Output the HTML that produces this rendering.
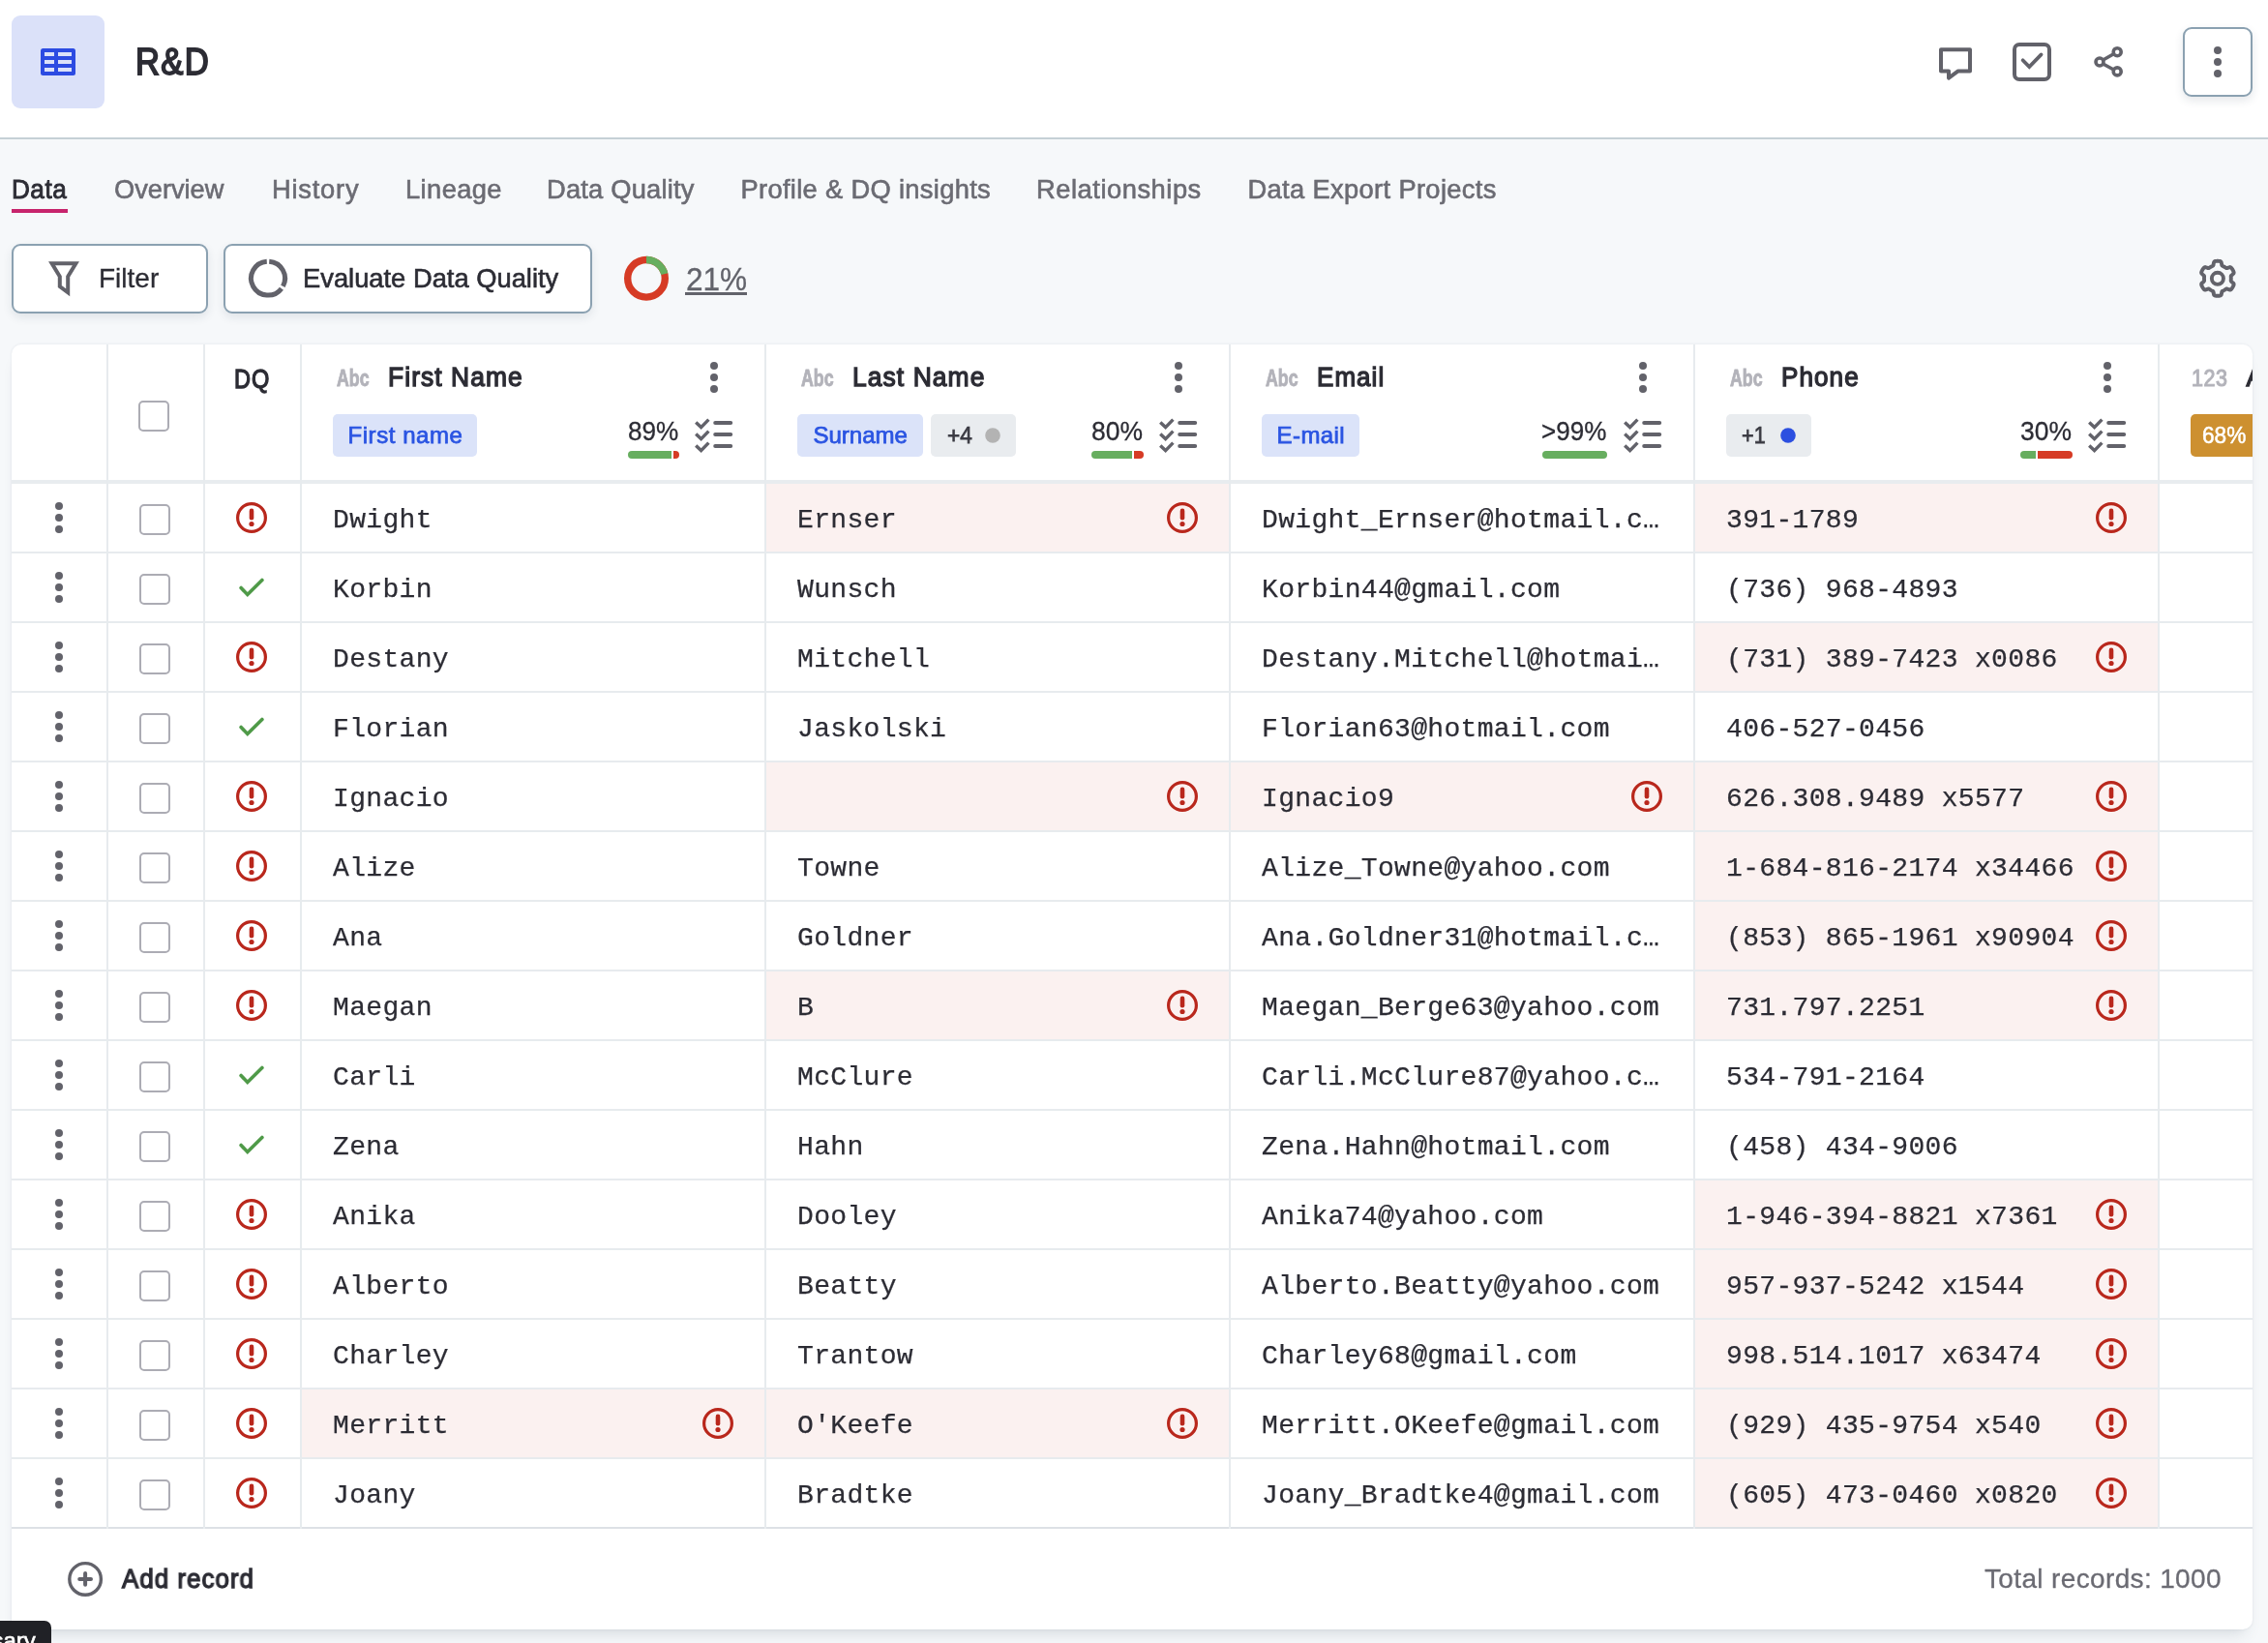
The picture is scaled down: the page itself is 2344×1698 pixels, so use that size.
<!DOCTYPE html>
<html lang="en"><head><meta charset="utf-8"><title>R&amp;D</title>
<style>
html,body{margin:0;padding:0}
body{width:2344px;height:1698px;overflow:hidden;background:#f6f8fa;position:relative;font-family:"Liberation Sans",sans-serif}
.r{position:absolute;display:block}
.t{position:absolute;white-space:nowrap;line-height:1;transform-origin:0 0}
.s{font-family:"Liberation Sans",sans-serif}
.m{font-family:"Liberation Mono",monospace}
.bm{display:inline-block;width:0;height:0}
#root{position:absolute;left:0;top:0;width:2344px;height:1698px;will-change:transform}
</style></head>
<body>
<div id="root">
<div class="r" style="left:0px;top:0px;width:2344px;height:142px;background:#fff;"></div>
<div class="r" style="left:0px;top:142px;width:2344px;height:2px;background:#c5d0d6;"></div>
<div class="r" style="left:12px;top:16px;width:96px;height:96px;background:#dbe1f9;border-radius:9px;"></div>
<svg class="r" style="left:42px;top:50px" width="36" height="28" viewBox="0 0 36 28"><rect width="36" height="28" rx="2.5" fill="#2c4be2"/><rect x="4" y="4" width="10" height="4" fill="#dbe1f9"/><rect x="18" y="4" width="14" height="4" fill="#dbe1f9"/><rect x="4" y="12" width="10" height="4" fill="#dbe1f9"/><rect x="18" y="12" width="14" height="4" fill="#dbe1f9"/><rect x="4" y="20" width="10" height="4" fill="#dbe1f9"/><rect x="18" y="20" width="14" height="4" fill="#dbe1f9"/></svg>
<div class="t s" id="title" style="left:140.00px;top:45.01px;font-size:38px;color:#2c2c34;-webkit-text-stroke:1.8px #2c2c34;letter-spacing:1.400px;transform:scaleX(0.9125);">R&amp;D</div>
<svg class="r" style="left:1996px;top:40px" width="52" height="52" viewBox="0 0 52 52"><path d="M10,11.3 H40 V33.4 H27.8 L18,40.6 V33.4 H10 Z" fill="none" stroke="#62626a" stroke-width="4" stroke-linejoin="round"/></svg>
<svg class="r" style="left:2076px;top:40px" width="48" height="48" viewBox="0 0 48 48"><rect x="6" y="6" width="36" height="36" rx="5" fill="none" stroke="#62626a" stroke-width="4"/><path d="M14.6,22.2 L21.3,29 L33.6,16.4" fill="none" stroke="#62626a" stroke-width="3.7" stroke-linecap="round"/></svg>
<svg class="r" style="left:2156px;top:40px" width="48" height="48" viewBox="0 0 48 48"><g fill="none" stroke="#62626a" stroke-width="3.6"><path d="M17.5,22 L28.5,15.8 M17.5,26 L28.5,32"/><circle cx="32.2" cy="13.7" r="4"/><circle cx="14" cy="24" r="4"/><circle cx="32.2" cy="33.9" r="4"/></g></svg>
<div class="r" style="left:2256px;top:28px;width:72px;height:72px;background:#fff;box-sizing:border-box;border:2px solid #8ba1b1;border-radius:9px;box-shadow:0 4px 10px rgba(40,60,80,.12);"></div>
<svg class="r" style="left:2280px;top:40px" width="24" height="48" viewBox="0 0 24 48"><g fill="#62626a"><circle cx="12" cy="12" r="4"/><circle cx="12" cy="24" r="4"/><circle cx="12" cy="36" r="4"/></g></svg>
<div class="t s" id="tab0" style="left:11.50px;top:182.00px;font-size:27.2px;color:#2c2c34;-webkit-text-stroke:0.9px #2c2c34;letter-spacing:0.500px;transform:scaleX(0.9622);">Data</div>
<div class="r" style="left:12px;top:216px;width:58px;height:4px;background:#c7246c;"></div>
<div class="t s" id="tab1" style="left:118.00px;top:182.00px;font-size:27.3px;color:#6b6b73;-webkit-text-stroke:0.6px #6b6b73;transform:scaleX(0.9965);">Overview</div>
<div class="t s" id="tab2" style="left:281.00px;top:182.00px;font-size:27.3px;color:#6b6b73;-webkit-text-stroke:0.6px #6b6b73;letter-spacing:0.767px;">History</div>
<div class="t s" id="tab3" style="left:419.00px;top:182.00px;font-size:27.3px;color:#6b6b73;-webkit-text-stroke:0.6px #6b6b73;letter-spacing:0.400px;">Lineage</div>
<div class="t s" id="tab4" style="left:565.00px;top:182.00px;font-size:27.3px;color:#6b6b73;-webkit-text-stroke:0.6px #6b6b73;letter-spacing:0.200px;">Data Quality</div>
<div class="t s" id="tab5" style="left:765.50px;top:182.00px;font-size:27.3px;color:#6b6b73;-webkit-text-stroke:0.6px #6b6b73;letter-spacing:0.320px;">Profile &amp; DQ insights</div>
<div class="t s" id="tab6" style="left:1071.00px;top:182.00px;font-size:27.3px;color:#6b6b73;-webkit-text-stroke:0.6px #6b6b73;letter-spacing:0.533px;">Relationships</div>
<div class="t s" id="tab7" style="left:1289.50px;top:182.00px;font-size:27.3px;color:#6b6b73;-webkit-text-stroke:0.6px #6b6b73;letter-spacing:0.347px;">Data Export Projects</div>
<div class="r" style="left:12px;top:252px;width:203px;height:72px;background:#fff;box-sizing:border-box;border:2px solid #8ba1b1;border-radius:9px;box-shadow:0 4px 10px rgba(40,60,80,.10);"></div>
<svg class="r" style="left:46px;top:266px" width="40" height="44" viewBox="0 0 40 44"><path d="M7.6,6.3 H32.4 L24.2,19.8 V36.3 L15.8,30 V19.8 Z" fill="none" stroke="#62626a" stroke-width="4" stroke-linejoin="miter"/></svg>
<div class="t s" id="filter" style="left:102.00px;top:274.01px;font-size:28px;color:#2c2c34;-webkit-text-stroke:0.3px #2c2c34;">Filter</div>
<div class="r" style="left:231px;top:252px;width:381px;height:72px;background:#fff;box-sizing:border-box;border:2px solid #8ba1b1;border-radius:9px;box-shadow:0 4px 10px rgba(40,60,80,.10);"></div>
<svg class="r" style="left:253px;top:264px" width="48" height="48" viewBox="0 0 48 48"><g fill="none" stroke="#62626a" stroke-width="5"><path d="M25.22,6.14 A17.5,17.5 0 0 1 39.45,31.82"/><path d="M37.98,34.13 A17.5,17.5 0 1 1 22.78,6.14"/></g></svg>
<div class="t s" id="eval" style="left:312.50px;top:274.00px;font-size:27.3px;color:#2c2c34;-webkit-text-stroke:0.6px #2c2c34;transform:scaleX(1.0008);">Evaluate Data Quality</div>
<svg class="r" style="left:644px;top:264px" width="48" height="48" viewBox="0 0 48 48"><g fill="none" stroke-width="7.4"><circle cx="24" cy="23.8" r="19.3" stroke="#d63b25"/><path d="M24.00,4.50 A19.3,19.3 0 0 1 42.73,19.13" stroke="#67ae5f"/></g></svg>
<div class="t s" id="pct21" style="left:709.00px;top:271.01px;font-size:34px;color:#62636b;-webkit-text-stroke:0.3px #62636b;transform:scaleX(0.9274);">21%</div>
<div class="r" style="left:708px;top:302px;width:63.8px;height:2.7px;background:#62636b;"></div>
<svg class="r" style="left:2268px;top:264px" width="48" height="48" viewBox="0 0 48 48"><g fill="none" stroke="#62626a" stroke-width="3.9" stroke-linejoin="round"><path d="M23.90,5.80 L24.69,5.82 L25.47,5.88 L26.25,5.99 L27.00,6.21 L27.66,6.84 L28.03,8.39 L28.27,9.95 L28.70,10.61 L29.23,10.93 L29.78,11.20 L30.32,11.47 L30.85,11.76 L31.37,12.08 L31.88,12.41 L32.38,12.75 L32.93,13.04 L33.71,13.09 L35.18,12.52 L36.71,12.06 L37.58,12.32 L38.15,12.86 L38.64,13.48 L39.08,14.13 L39.49,14.80 L39.86,15.49 L40.21,16.20 L40.50,16.92 L40.68,17.69 L40.47,18.58 L39.31,19.67 L38.08,20.66 L37.73,21.36 L37.71,21.98 L37.75,22.59 L37.79,23.19 L37.80,23.80 L37.79,24.41 L37.75,25.01 L37.71,25.62 L37.73,26.24 L38.08,26.94 L39.31,27.93 L40.47,29.02 L40.68,29.91 L40.50,30.68 L40.21,31.40 L39.86,32.11 L39.49,32.80 L39.08,33.47 L38.64,34.12 L38.15,34.74 L37.58,35.28 L36.71,35.54 L35.18,35.08 L33.71,34.51 L32.93,34.56 L32.38,34.85 L31.88,35.19 L31.37,35.52 L30.85,35.84 L30.32,36.13 L29.78,36.40 L29.23,36.67 L28.70,36.99 L28.27,37.65 L28.03,39.21 L27.66,40.76 L27.00,41.39 L26.25,41.61 L25.47,41.72 L24.69,41.78 L23.90,41.80 L23.11,41.78 L22.33,41.72 L21.55,41.61 L20.80,41.39 L20.14,40.76 L19.77,39.21 L19.53,37.65 L19.10,36.99 L18.57,36.67 L18.02,36.40 L17.48,36.13 L16.95,35.84 L16.43,35.52 L15.92,35.19 L15.42,34.85 L14.87,34.56 L14.09,34.51 L12.62,35.08 L11.09,35.54 L10.22,35.28 L9.65,34.74 L9.16,34.12 L8.72,33.47 L8.31,32.80 L7.94,32.11 L7.59,31.40 L7.30,30.68 L7.12,29.91 L7.33,29.02 L8.49,27.93 L9.72,26.94 L10.07,26.24 L10.09,25.62 L10.05,25.01 L10.01,24.41 L10.00,23.80 L10.01,23.19 L10.05,22.59 L10.09,21.98 L10.07,21.36 L9.72,20.66 L8.49,19.67 L7.33,18.58 L7.12,17.69 L7.30,16.92 L7.59,16.20 L7.94,15.49 L8.31,14.80 L8.72,14.13 L9.16,13.48 L9.65,12.86 L10.22,12.32 L11.09,12.06 L12.62,12.52 L14.09,13.09 L14.87,13.04 L15.42,12.75 L15.92,12.41 L16.43,12.08 L16.95,11.76 L17.48,11.47 L18.02,11.20 L18.57,10.93 L19.10,10.61 L19.53,9.95 L19.77,8.39 L20.14,6.84 L20.80,6.21 L21.55,5.99 L22.33,5.88 L23.11,5.82 Z"/><circle cx="23.9" cy="23.8" r="6.05"/></g></svg>
<div class="r" style="left:12px;top:356px;width:2316px;height:1328px;background:#fff;border-radius:10px;box-shadow:0 0 3px rgba(50,70,90,.10),0 12px 16px -8px rgba(50,70,90,.17);"></div>
<div class="r" id="tbl" style="left:12px;top:356px;width:2316px;height:1328px;border-radius:10px;overflow:hidden;">
<div style="position:absolute;left:-12px;top:-356px;">
<div class="r" style="left:792px;top:500px;width:478px;height:70px;background:#fbf1f0;"></div>
<div class="r" style="left:1752px;top:500px;width:478px;height:70px;background:#fbf1f0;"></div>
<div class="r" style="left:1752px;top:644px;width:478px;height:70px;background:#fbf1f0;"></div>
<div class="r" style="left:792px;top:788px;width:478px;height:70px;background:#fbf1f0;"></div>
<div class="r" style="left:1272px;top:788px;width:478px;height:70px;background:#fbf1f0;"></div>
<div class="r" style="left:1752px;top:788px;width:478px;height:70px;background:#fbf1f0;"></div>
<div class="r" style="left:1752px;top:860px;width:478px;height:70px;background:#fbf1f0;"></div>
<div class="r" style="left:1752px;top:932px;width:478px;height:70px;background:#fbf1f0;"></div>
<div class="r" style="left:792px;top:1004px;width:478px;height:70px;background:#fbf1f0;"></div>
<div class="r" style="left:1752px;top:1004px;width:478px;height:70px;background:#fbf1f0;"></div>
<div class="r" style="left:1752px;top:1220px;width:478px;height:70px;background:#fbf1f0;"></div>
<div class="r" style="left:1752px;top:1292px;width:478px;height:70px;background:#fbf1f0;"></div>
<div class="r" style="left:1752px;top:1364px;width:478px;height:70px;background:#fbf1f0;"></div>
<div class="r" style="left:312px;top:1436px;width:478px;height:70px;background:#fbf1f0;"></div>
<div class="r" style="left:792px;top:1436px;width:478px;height:70px;background:#fbf1f0;"></div>
<div class="r" style="left:1752px;top:1436px;width:478px;height:70px;background:#fbf1f0;"></div>
<div class="r" style="left:1752px;top:1508px;width:478px;height:70px;background:#fbf1f0;"></div>
<div class="r" style="left:12px;top:570px;width:2316px;height:2px;background:#e7ebee;"></div>
<div class="r" style="left:12px;top:642px;width:2316px;height:2px;background:#e7ebee;"></div>
<div class="r" style="left:12px;top:714px;width:2316px;height:2px;background:#e7ebee;"></div>
<div class="r" style="left:12px;top:786px;width:2316px;height:2px;background:#e7ebee;"></div>
<div class="r" style="left:12px;top:858px;width:2316px;height:2px;background:#e7ebee;"></div>
<div class="r" style="left:12px;top:930px;width:2316px;height:2px;background:#e7ebee;"></div>
<div class="r" style="left:12px;top:1002px;width:2316px;height:2px;background:#e7ebee;"></div>
<div class="r" style="left:12px;top:1074px;width:2316px;height:2px;background:#e7ebee;"></div>
<div class="r" style="left:12px;top:1146px;width:2316px;height:2px;background:#e7ebee;"></div>
<div class="r" style="left:12px;top:1218px;width:2316px;height:2px;background:#e7ebee;"></div>
<div class="r" style="left:12px;top:1290px;width:2316px;height:2px;background:#e7ebee;"></div>
<div class="r" style="left:12px;top:1362px;width:2316px;height:2px;background:#e7ebee;"></div>
<div class="r" style="left:12px;top:1434px;width:2316px;height:2px;background:#e7ebee;"></div>
<div class="r" style="left:12px;top:1506px;width:2316px;height:2px;background:#e7ebee;"></div>
<div class="r" style="left:12px;top:1578px;width:2316px;height:2px;background:#dde1e5;"></div>
<div class="r" style="left:12px;top:496px;width:2316px;height:4px;background:#e8ecef;"></div>
<div class="r" style="left:110px;top:356px;width:2px;height:1224px;background:#e7ebee;"></div>
<div class="r" style="left:210px;top:356px;width:2px;height:1224px;background:#e7ebee;"></div>
<div class="r" style="left:310px;top:356px;width:2px;height:1224px;background:#e7ebee;"></div>
<div class="r" style="left:790px;top:356px;width:2px;height:1224px;background:#e7ebee;"></div>
<div class="r" style="left:1270px;top:356px;width:2px;height:1224px;background:#e7ebee;"></div>
<div class="r" style="left:1750px;top:356px;width:2px;height:1224px;background:#e7ebee;"></div>
<div class="r" style="left:2230px;top:356px;width:2px;height:1224px;background:#e7ebee;"></div>
<div class="r" style="left:143px;top:414px;width:32px;height:32px;background:#fff;box-sizing:border-box;border:2px solid #acacb4;border-radius:5px;"></div>
<div class="t s" id="dq" style="left:242.00px;top:379.00px;font-size:26.8px;color:#2c2c34;-webkit-text-stroke:1.3px #2c2c34;letter-spacing:1.100px;transform:scaleX(0.8777);">DQ</div>
<div class="t s" id="abc0" style="left:347.50px;top:379.01px;font-size:24px;color:#b3b3ba;font-weight:700;-webkit-text-stroke:0.9px #b3b3ba;transform:scaleX(0.7395);">Abc</div>
<div class="t s" id="h0" style="left:401.00px;top:377.00px;font-size:26.8px;color:#2c2c34;-webkit-text-stroke:1.3px #2c2c34;letter-spacing:1.100px;transform:scaleX(0.9843);">First Name</div>
<svg class="r" style="left:732px;top:371.95px" width="12" height="36.1" viewBox="0 0 12 36.1"><g fill="#62626a"><circle cx="6" cy="6" r="4.0"/><circle cx="6" cy="18.05" r="4.0"/><circle cx="6" cy="30.1" r="4.0"/></g></svg>
<div class="r" style="left:344px;top:428px;width:148.8px;height:44px;background:#dbe3f9;border-radius:5px;"></div>
<div class="t s" id="chip0_0" style="left:359.50px;top:438.01px;font-size:24px;color:#2a54e2;-webkit-text-stroke:0.75px #2a54e2;letter-spacing:0.556px;">First name</div>
<div class="t s" id="pct0" style="left:649.00px;top:432.01px;font-size:28px;color:#2c2c34;-webkit-text-stroke:0.3px #2c2c34;transform:scaleX(0.9336);">89%</div>
<div class="r" style="left:649px;top:466px;width:45px;height:8px;background:#67ae5f;border-radius:4px 0 0 4px;"></div>
<div class="r" style="left:696px;top:466px;width:6px;height:8px;background:#d63b25;border-radius:0 4px 4px 0;"></div>
<svg class="r" style="left:717.3px;top:431.3px" width="42" height="40" viewBox="0 0 42 40"><g fill="none" stroke="#62626a" stroke-linecap="round" stroke-linejoin="miter"><path d="M2.2,5.6 L7.6,10.6 L15.4,2.6" stroke-width="3.4" stroke-linecap="butt"/><path d="M22.2,6 H38.2" stroke-width="4"/><path d="M2.2,17.6 L7.6,22.6 L15.4,14.6" stroke-width="3.4" stroke-linecap="butt"/><path d="M22.2,18 H38.2" stroke-width="4"/><path d="M2.2,29.6 L7.6,34.6 L15.4,26.6" stroke-width="3.4" stroke-linecap="butt"/><path d="M22.2,30 H38.2" stroke-width="4"/></g></svg>
<div class="t s" id="abc1" style="left:827.50px;top:379.01px;font-size:24px;color:#b3b3ba;font-weight:700;-webkit-text-stroke:0.9px #b3b3ba;transform:scaleX(0.7395);">Abc</div>
<div class="t s" id="h1" style="left:881.00px;top:377.00px;font-size:26.8px;color:#2c2c34;-webkit-text-stroke:1.3px #2c2c34;letter-spacing:1.100px;transform:scaleX(0.9854);">Last Name</div>
<svg class="r" style="left:1212px;top:371.95px" width="12" height="36.1" viewBox="0 0 12 36.1"><g fill="#62626a"><circle cx="6" cy="6" r="4.0"/><circle cx="6" cy="18.05" r="4.0"/><circle cx="6" cy="30.1" r="4.0"/></g></svg>
<div class="r" style="left:824px;top:428px;width:129.5px;height:44px;background:#dbe3f9;border-radius:5px;"></div>
<div class="t s" id="chip1_0" style="left:840.50px;top:438.01px;font-size:24px;color:#2a54e2;-webkit-text-stroke:0.75px #2a54e2;">Surname</div>
<div class="r" style="left:962.4px;top:428px;width:87.39999999999998px;height:44px;background:#e9ecef;border-radius:5px;"></div>
<div class="t s" id="chip1_1" style="left:979.00px;top:438.01px;font-size:24px;color:#3a3a42;-webkit-text-stroke:0.75px #3a3a42;transform:scaleX(0.9416);">+4</div>
<svg class="r" style="left:1017.8px;top:442px" width="16" height="16" viewBox="0 0 16 16"><circle cx="8" cy="8" r="7.8" fill="#b3b3b3"/></svg>
<div class="t s" id="pct1" style="left:1128.00px;top:432.01px;font-size:28px;color:#2c2c34;-webkit-text-stroke:0.3px #2c2c34;transform:scaleX(0.9455);">80%</div>
<div class="r" style="left:1128px;top:466px;width:42px;height:8px;background:#67ae5f;border-radius:4px 0 0 4px;"></div>
<div class="r" style="left:1172px;top:466px;width:10px;height:8px;background:#d63b25;border-radius:0 4px 4px 0;"></div>
<svg class="r" style="left:1197.3px;top:431.3px" width="42" height="40" viewBox="0 0 42 40"><g fill="none" stroke="#62626a" stroke-linecap="round" stroke-linejoin="miter"><path d="M2.2,5.6 L7.6,10.6 L15.4,2.6" stroke-width="3.4" stroke-linecap="butt"/><path d="M22.2,6 H38.2" stroke-width="4"/><path d="M2.2,17.6 L7.6,22.6 L15.4,14.6" stroke-width="3.4" stroke-linecap="butt"/><path d="M22.2,18 H38.2" stroke-width="4"/><path d="M2.2,29.6 L7.6,34.6 L15.4,26.6" stroke-width="3.4" stroke-linecap="butt"/><path d="M22.2,30 H38.2" stroke-width="4"/></g></svg>
<div class="t s" id="abc2" style="left:1307.50px;top:379.01px;font-size:24px;color:#b3b3ba;font-weight:700;-webkit-text-stroke:0.9px #b3b3ba;transform:scaleX(0.7395);">Abc</div>
<div class="t s" id="h2" style="left:1361.00px;top:377.00px;font-size:26.8px;color:#2c2c34;-webkit-text-stroke:1.3px #2c2c34;letter-spacing:1.100px;transform:scaleX(0.9686);">Email</div>
<svg class="r" style="left:1692px;top:371.95px" width="12" height="36.1" viewBox="0 0 12 36.1"><g fill="#62626a"><circle cx="6" cy="6" r="4.0"/><circle cx="6" cy="18.05" r="4.0"/><circle cx="6" cy="30.1" r="4.0"/></g></svg>
<div class="r" style="left:1304px;top:428px;width:100.70000000000005px;height:44px;background:#dbe3f9;border-radius:5px;"></div>
<div class="t s" id="chip2_0" style="left:1319.50px;top:438.01px;font-size:24px;color:#2a54e2;-webkit-text-stroke:0.75px #2a54e2;letter-spacing:0.440px;">E-mail</div>
<div class="t s" id="pct2" style="left:1593.00px;top:432.01px;font-size:28px;color:#2c2c34;-webkit-text-stroke:0.3px #2c2c34;transform:scaleX(0.9296);">&gt;99%</div>
<div class="r" style="left:1594px;top:466px;width:67px;height:8px;background:#67ae5f;border-radius:4px;"></div>
<svg class="r" style="left:1677.3px;top:431.3px" width="42" height="40" viewBox="0 0 42 40"><g fill="none" stroke="#62626a" stroke-linecap="round" stroke-linejoin="miter"><path d="M2.2,5.6 L7.6,10.6 L15.4,2.6" stroke-width="3.4" stroke-linecap="butt"/><path d="M22.2,6 H38.2" stroke-width="4"/><path d="M2.2,17.6 L7.6,22.6 L15.4,14.6" stroke-width="3.4" stroke-linecap="butt"/><path d="M22.2,18 H38.2" stroke-width="4"/><path d="M2.2,29.6 L7.6,34.6 L15.4,26.6" stroke-width="3.4" stroke-linecap="butt"/><path d="M22.2,30 H38.2" stroke-width="4"/></g></svg>
<div class="t s" id="abc3" style="left:1787.50px;top:379.01px;font-size:24px;color:#b3b3ba;font-weight:700;-webkit-text-stroke:0.9px #b3b3ba;transform:scaleX(0.7395);">Abc</div>
<div class="t s" id="h3" style="left:1841.00px;top:377.00px;font-size:26.8px;color:#2c2c34;-webkit-text-stroke:1.3px #2c2c34;letter-spacing:1.100px;transform:scaleX(0.9729);">Phone</div>
<svg class="r" style="left:2172px;top:371.95px" width="12" height="36.1" viewBox="0 0 12 36.1"><g fill="#62626a"><circle cx="6" cy="6" r="4.0"/><circle cx="6" cy="18.05" r="4.0"/><circle cx="6" cy="30.1" r="4.0"/></g></svg>
<div class="r" style="left:1784px;top:428px;width:87.70000000000005px;height:44px;background:#e9ecef;border-radius:5px;"></div>
<div class="t s" id="chip3_0" style="left:1800.00px;top:438.01px;font-size:24px;color:#3a3a42;-webkit-text-stroke:0.75px #3a3a42;transform:scaleX(0.9015);">+1</div>
<svg class="r" style="left:1839.7px;top:442px" width="16" height="16" viewBox="0 0 16 16"><circle cx="8" cy="8" r="7.8" fill="#2c4fe0"/></svg>
<div class="t s" id="pct3" style="left:2088.00px;top:432.01px;font-size:28px;color:#2c2c34;-webkit-text-stroke:0.3px #2c2c34;transform:scaleX(0.9455);">30%</div>
<div class="r" style="left:2088px;top:466px;width:16px;height:8px;background:#67ae5f;border-radius:4px 0 0 4px;"></div>
<div class="r" style="left:2106px;top:466px;width:36px;height:8px;background:#d63b25;border-radius:0 4px 4px 0;"></div>
<svg class="r" style="left:2157.3px;top:431.3px" width="42" height="40" viewBox="0 0 42 40"><g fill="none" stroke="#62626a" stroke-linecap="round" stroke-linejoin="miter"><path d="M2.2,5.6 L7.6,10.6 L15.4,2.6" stroke-width="3.4" stroke-linecap="butt"/><path d="M22.2,6 H38.2" stroke-width="4"/><path d="M2.2,17.6 L7.6,22.6 L15.4,14.6" stroke-width="3.4" stroke-linecap="butt"/><path d="M22.2,18 H38.2" stroke-width="4"/><path d="M2.2,29.6 L7.6,34.6 L15.4,26.6" stroke-width="3.4" stroke-linecap="butt"/><path d="M22.2,30 H38.2" stroke-width="4"/></g></svg>
<div class="t s" id="n123" style="left:2264.50px;top:379.00px;font-size:24.5px;color:#b3b3ba;-webkit-text-stroke:1.1px #b3b3ba;letter-spacing:0.600px;transform:scaleX(0.8780);">123</div>
<div class="t s" id="colA" style="left:2321.50px;top:376.00px;font-size:27.2px;color:#2c2c34;-webkit-text-stroke:1.3px #2c2c34;">Age</div>
<div class="r" style="left:2264px;top:428px;width:80px;height:44px;background:#cd9030;border-radius:5px;"></div>
<div class="t s" id="pct68" style="left:2275.50px;top:438.01px;font-size:24px;color:#fff;-webkit-text-stroke:0.55px #fff;transform:scaleX(0.9435);">68%</div>
<svg class="r" style="left:55px;top:516.95px" width="12" height="36.1" viewBox="0 0 12 36.1"><g fill="#62626a"><circle cx="6" cy="6" r="4.0"/><circle cx="6" cy="18.05" r="4.0"/><circle cx="6" cy="30.1" r="4.0"/></g></svg>
<div class="r" style="left:144px;top:521px;width:32px;height:32px;background:#fff;box-sizing:border-box;border:2px solid #acacb4;border-radius:5px;"></div>
<svg class="r" style="left:242px;top:517px" width="36" height="36" viewBox="0 0 36 36"><g><circle cx="18" cy="18" r="14.4" fill="none" stroke="#b9271c" stroke-width="3.2"/><path d="M18,10.9 V18.3" stroke="#b9271c" stroke-width="4.6" stroke-linecap="round"/><circle cx="18" cy="24.5" r="2.6" fill="#b9271c"/></g></svg>
<div class="t m" style="left:344px;top:523.72px;font-size:28px;letter-spacing:.33px;color:#2c2c34;-webkit-text-stroke:.25px #2c2c34">Dwight</div>
<div class="t m" style="left:824px;top:523.72px;font-size:28px;letter-spacing:.33px;color:#2c2c34;-webkit-text-stroke:.25px #2c2c34">Ernser</div>
<svg class="r" style="left:1204px;top:517px" width="36" height="36" viewBox="0 0 36 36"><g><circle cx="18" cy="18" r="14.4" fill="none" stroke="#b9271c" stroke-width="3.2"/><path d="M18,10.9 V18.3" stroke="#b9271c" stroke-width="4.6" stroke-linecap="round"/><circle cx="18" cy="24.5" r="2.6" fill="#b9271c"/></g></svg>
<div class="t m" style="left:1304px;top:523.72px;font-size:28px;letter-spacing:.33px;color:#2c2c34;-webkit-text-stroke:.25px #2c2c34">Dwight_Ernser@hotmail.c…</div>
<div class="t m" style="left:1784px;top:523.72px;font-size:28px;letter-spacing:.33px;color:#2c2c34;-webkit-text-stroke:.25px #2c2c34">391-1789</div>
<svg class="r" style="left:2164px;top:517px" width="36" height="36" viewBox="0 0 36 36"><g><circle cx="18" cy="18" r="14.4" fill="none" stroke="#b9271c" stroke-width="3.2"/><path d="M18,10.9 V18.3" stroke="#b9271c" stroke-width="4.6" stroke-linecap="round"/><circle cx="18" cy="24.5" r="2.6" fill="#b9271c"/></g></svg>
<svg class="r" style="left:55px;top:588.95px" width="12" height="36.1" viewBox="0 0 12 36.1"><g fill="#62626a"><circle cx="6" cy="6" r="4.0"/><circle cx="6" cy="18.05" r="4.0"/><circle cx="6" cy="30.1" r="4.0"/></g></svg>
<div class="r" style="left:144px;top:593px;width:32px;height:32px;background:#fff;box-sizing:border-box;border:2px solid #acacb4;border-radius:5px;"></div>
<svg class="r" style="left:242px;top:589px" width="36" height="36" viewBox="0 0 36 36"><path d="M7.1,18.5 L13.8,25.5 L28.9,10.5" fill="none" stroke="#4f9a48" stroke-width="3.6" stroke-linecap="round" stroke-linejoin="miter"/></svg>
<div class="t m" style="left:344px;top:595.72px;font-size:28px;letter-spacing:.33px;color:#2c2c34;-webkit-text-stroke:.25px #2c2c34">Korbin</div>
<div class="t m" style="left:824px;top:595.72px;font-size:28px;letter-spacing:.33px;color:#2c2c34;-webkit-text-stroke:.25px #2c2c34">Wunsch</div>
<div class="t m" style="left:1304px;top:595.72px;font-size:28px;letter-spacing:.33px;color:#2c2c34;-webkit-text-stroke:.25px #2c2c34">Korbin44@gmail.com</div>
<div class="t m" style="left:1784px;top:595.72px;font-size:28px;letter-spacing:.33px;color:#2c2c34;-webkit-text-stroke:.25px #2c2c34">(736) 968-4893</div>
<svg class="r" style="left:55px;top:660.95px" width="12" height="36.1" viewBox="0 0 12 36.1"><g fill="#62626a"><circle cx="6" cy="6" r="4.0"/><circle cx="6" cy="18.05" r="4.0"/><circle cx="6" cy="30.1" r="4.0"/></g></svg>
<div class="r" style="left:144px;top:665px;width:32px;height:32px;background:#fff;box-sizing:border-box;border:2px solid #acacb4;border-radius:5px;"></div>
<svg class="r" style="left:242px;top:661px" width="36" height="36" viewBox="0 0 36 36"><g><circle cx="18" cy="18" r="14.4" fill="none" stroke="#b9271c" stroke-width="3.2"/><path d="M18,10.9 V18.3" stroke="#b9271c" stroke-width="4.6" stroke-linecap="round"/><circle cx="18" cy="24.5" r="2.6" fill="#b9271c"/></g></svg>
<div class="t m" style="left:344px;top:667.72px;font-size:28px;letter-spacing:.33px;color:#2c2c34;-webkit-text-stroke:.25px #2c2c34">Destany</div>
<div class="t m" style="left:824px;top:667.72px;font-size:28px;letter-spacing:.33px;color:#2c2c34;-webkit-text-stroke:.25px #2c2c34">Mitchell</div>
<div class="t m" style="left:1304px;top:667.72px;font-size:28px;letter-spacing:.33px;color:#2c2c34;-webkit-text-stroke:.25px #2c2c34">Destany.Mitchell@hotmai…</div>
<div class="t m" style="left:1784px;top:667.72px;font-size:28px;letter-spacing:.33px;color:#2c2c34;-webkit-text-stroke:.25px #2c2c34">(731) 389-7423 x0086</div>
<svg class="r" style="left:2164px;top:661px" width="36" height="36" viewBox="0 0 36 36"><g><circle cx="18" cy="18" r="14.4" fill="none" stroke="#b9271c" stroke-width="3.2"/><path d="M18,10.9 V18.3" stroke="#b9271c" stroke-width="4.6" stroke-linecap="round"/><circle cx="18" cy="24.5" r="2.6" fill="#b9271c"/></g></svg>
<svg class="r" style="left:55px;top:732.95px" width="12" height="36.1" viewBox="0 0 12 36.1"><g fill="#62626a"><circle cx="6" cy="6" r="4.0"/><circle cx="6" cy="18.05" r="4.0"/><circle cx="6" cy="30.1" r="4.0"/></g></svg>
<div class="r" style="left:144px;top:737px;width:32px;height:32px;background:#fff;box-sizing:border-box;border:2px solid #acacb4;border-radius:5px;"></div>
<svg class="r" style="left:242px;top:733px" width="36" height="36" viewBox="0 0 36 36"><path d="M7.1,18.5 L13.8,25.5 L28.9,10.5" fill="none" stroke="#4f9a48" stroke-width="3.6" stroke-linecap="round" stroke-linejoin="miter"/></svg>
<div class="t m" style="left:344px;top:739.72px;font-size:28px;letter-spacing:.33px;color:#2c2c34;-webkit-text-stroke:.25px #2c2c34">Florian</div>
<div class="t m" style="left:824px;top:739.72px;font-size:28px;letter-spacing:.33px;color:#2c2c34;-webkit-text-stroke:.25px #2c2c34">Jaskolski</div>
<div class="t m" style="left:1304px;top:739.72px;font-size:28px;letter-spacing:.33px;color:#2c2c34;-webkit-text-stroke:.25px #2c2c34">Florian63@hotmail.com</div>
<div class="t m" style="left:1784px;top:739.72px;font-size:28px;letter-spacing:.33px;color:#2c2c34;-webkit-text-stroke:.25px #2c2c34">406-527-0456</div>
<svg class="r" style="left:55px;top:804.95px" width="12" height="36.1" viewBox="0 0 12 36.1"><g fill="#62626a"><circle cx="6" cy="6" r="4.0"/><circle cx="6" cy="18.05" r="4.0"/><circle cx="6" cy="30.1" r="4.0"/></g></svg>
<div class="r" style="left:144px;top:809px;width:32px;height:32px;background:#fff;box-sizing:border-box;border:2px solid #acacb4;border-radius:5px;"></div>
<svg class="r" style="left:242px;top:805px" width="36" height="36" viewBox="0 0 36 36"><g><circle cx="18" cy="18" r="14.4" fill="none" stroke="#b9271c" stroke-width="3.2"/><path d="M18,10.9 V18.3" stroke="#b9271c" stroke-width="4.6" stroke-linecap="round"/><circle cx="18" cy="24.5" r="2.6" fill="#b9271c"/></g></svg>
<div class="t m" style="left:344px;top:811.72px;font-size:28px;letter-spacing:.33px;color:#2c2c34;-webkit-text-stroke:.25px #2c2c34">Ignacio</div>
<svg class="r" style="left:1204px;top:805px" width="36" height="36" viewBox="0 0 36 36"><g><circle cx="18" cy="18" r="14.4" fill="none" stroke="#b9271c" stroke-width="3.2"/><path d="M18,10.9 V18.3" stroke="#b9271c" stroke-width="4.6" stroke-linecap="round"/><circle cx="18" cy="24.5" r="2.6" fill="#b9271c"/></g></svg>
<div class="t m" style="left:1304px;top:811.72px;font-size:28px;letter-spacing:.33px;color:#2c2c34;-webkit-text-stroke:.25px #2c2c34">Ignacio9</div>
<svg class="r" style="left:1684px;top:805px" width="36" height="36" viewBox="0 0 36 36"><g><circle cx="18" cy="18" r="14.4" fill="none" stroke="#b9271c" stroke-width="3.2"/><path d="M18,10.9 V18.3" stroke="#b9271c" stroke-width="4.6" stroke-linecap="round"/><circle cx="18" cy="24.5" r="2.6" fill="#b9271c"/></g></svg>
<div class="t m" style="left:1784px;top:811.72px;font-size:28px;letter-spacing:.33px;color:#2c2c34;-webkit-text-stroke:.25px #2c2c34">626.308.9489 x5577</div>
<svg class="r" style="left:2164px;top:805px" width="36" height="36" viewBox="0 0 36 36"><g><circle cx="18" cy="18" r="14.4" fill="none" stroke="#b9271c" stroke-width="3.2"/><path d="M18,10.9 V18.3" stroke="#b9271c" stroke-width="4.6" stroke-linecap="round"/><circle cx="18" cy="24.5" r="2.6" fill="#b9271c"/></g></svg>
<svg class="r" style="left:55px;top:876.95px" width="12" height="36.1" viewBox="0 0 12 36.1"><g fill="#62626a"><circle cx="6" cy="6" r="4.0"/><circle cx="6" cy="18.05" r="4.0"/><circle cx="6" cy="30.1" r="4.0"/></g></svg>
<div class="r" style="left:144px;top:881px;width:32px;height:32px;background:#fff;box-sizing:border-box;border:2px solid #acacb4;border-radius:5px;"></div>
<svg class="r" style="left:242px;top:877px" width="36" height="36" viewBox="0 0 36 36"><g><circle cx="18" cy="18" r="14.4" fill="none" stroke="#b9271c" stroke-width="3.2"/><path d="M18,10.9 V18.3" stroke="#b9271c" stroke-width="4.6" stroke-linecap="round"/><circle cx="18" cy="24.5" r="2.6" fill="#b9271c"/></g></svg>
<div class="t m" style="left:344px;top:883.72px;font-size:28px;letter-spacing:.33px;color:#2c2c34;-webkit-text-stroke:.25px #2c2c34">Alize</div>
<div class="t m" style="left:824px;top:883.72px;font-size:28px;letter-spacing:.33px;color:#2c2c34;-webkit-text-stroke:.25px #2c2c34">Towne</div>
<div class="t m" style="left:1304px;top:883.72px;font-size:28px;letter-spacing:.33px;color:#2c2c34;-webkit-text-stroke:.25px #2c2c34">Alize_Towne@yahoo.com</div>
<div class="t m" style="left:1784px;top:883.72px;font-size:28px;letter-spacing:.33px;color:#2c2c34;-webkit-text-stroke:.25px #2c2c34">1-684-816-2174 x34466</div>
<svg class="r" style="left:2164px;top:877px" width="36" height="36" viewBox="0 0 36 36"><g><circle cx="18" cy="18" r="14.4" fill="none" stroke="#b9271c" stroke-width="3.2"/><path d="M18,10.9 V18.3" stroke="#b9271c" stroke-width="4.6" stroke-linecap="round"/><circle cx="18" cy="24.5" r="2.6" fill="#b9271c"/></g></svg>
<svg class="r" style="left:55px;top:948.95px" width="12" height="36.1" viewBox="0 0 12 36.1"><g fill="#62626a"><circle cx="6" cy="6" r="4.0"/><circle cx="6" cy="18.05" r="4.0"/><circle cx="6" cy="30.1" r="4.0"/></g></svg>
<div class="r" style="left:144px;top:953px;width:32px;height:32px;background:#fff;box-sizing:border-box;border:2px solid #acacb4;border-radius:5px;"></div>
<svg class="r" style="left:242px;top:949px" width="36" height="36" viewBox="0 0 36 36"><g><circle cx="18" cy="18" r="14.4" fill="none" stroke="#b9271c" stroke-width="3.2"/><path d="M18,10.9 V18.3" stroke="#b9271c" stroke-width="4.6" stroke-linecap="round"/><circle cx="18" cy="24.5" r="2.6" fill="#b9271c"/></g></svg>
<div class="t m" style="left:344px;top:955.72px;font-size:28px;letter-spacing:.33px;color:#2c2c34;-webkit-text-stroke:.25px #2c2c34">Ana</div>
<div class="t m" style="left:824px;top:955.72px;font-size:28px;letter-spacing:.33px;color:#2c2c34;-webkit-text-stroke:.25px #2c2c34">Goldner</div>
<div class="t m" style="left:1304px;top:955.72px;font-size:28px;letter-spacing:.33px;color:#2c2c34;-webkit-text-stroke:.25px #2c2c34">Ana.Goldner31@hotmail.c…</div>
<div class="t m" style="left:1784px;top:955.72px;font-size:28px;letter-spacing:.33px;color:#2c2c34;-webkit-text-stroke:.25px #2c2c34">(853) 865-1961 x90904</div>
<svg class="r" style="left:2164px;top:949px" width="36" height="36" viewBox="0 0 36 36"><g><circle cx="18" cy="18" r="14.4" fill="none" stroke="#b9271c" stroke-width="3.2"/><path d="M18,10.9 V18.3" stroke="#b9271c" stroke-width="4.6" stroke-linecap="round"/><circle cx="18" cy="24.5" r="2.6" fill="#b9271c"/></g></svg>
<svg class="r" style="left:55px;top:1020.95px" width="12" height="36.1" viewBox="0 0 12 36.1"><g fill="#62626a"><circle cx="6" cy="6" r="4.0"/><circle cx="6" cy="18.05" r="4.0"/><circle cx="6" cy="30.1" r="4.0"/></g></svg>
<div class="r" style="left:144px;top:1025px;width:32px;height:32px;background:#fff;box-sizing:border-box;border:2px solid #acacb4;border-radius:5px;"></div>
<svg class="r" style="left:242px;top:1021px" width="36" height="36" viewBox="0 0 36 36"><g><circle cx="18" cy="18" r="14.4" fill="none" stroke="#b9271c" stroke-width="3.2"/><path d="M18,10.9 V18.3" stroke="#b9271c" stroke-width="4.6" stroke-linecap="round"/><circle cx="18" cy="24.5" r="2.6" fill="#b9271c"/></g></svg>
<div class="t m" style="left:344px;top:1027.72px;font-size:28px;letter-spacing:.33px;color:#2c2c34;-webkit-text-stroke:.25px #2c2c34">Maegan</div>
<div class="t m" style="left:824px;top:1027.72px;font-size:28px;letter-spacing:.33px;color:#2c2c34;-webkit-text-stroke:.25px #2c2c34">B</div>
<svg class="r" style="left:1204px;top:1021px" width="36" height="36" viewBox="0 0 36 36"><g><circle cx="18" cy="18" r="14.4" fill="none" stroke="#b9271c" stroke-width="3.2"/><path d="M18,10.9 V18.3" stroke="#b9271c" stroke-width="4.6" stroke-linecap="round"/><circle cx="18" cy="24.5" r="2.6" fill="#b9271c"/></g></svg>
<div class="t m" style="left:1304px;top:1027.72px;font-size:28px;letter-spacing:.33px;color:#2c2c34;-webkit-text-stroke:.25px #2c2c34">Maegan_Berge63@yahoo.com</div>
<div class="t m" style="left:1784px;top:1027.72px;font-size:28px;letter-spacing:.33px;color:#2c2c34;-webkit-text-stroke:.25px #2c2c34">731.797.2251</div>
<svg class="r" style="left:2164px;top:1021px" width="36" height="36" viewBox="0 0 36 36"><g><circle cx="18" cy="18" r="14.4" fill="none" stroke="#b9271c" stroke-width="3.2"/><path d="M18,10.9 V18.3" stroke="#b9271c" stroke-width="4.6" stroke-linecap="round"/><circle cx="18" cy="24.5" r="2.6" fill="#b9271c"/></g></svg>
<svg class="r" style="left:55px;top:1092.95px" width="12" height="36.1" viewBox="0 0 12 36.1"><g fill="#62626a"><circle cx="6" cy="6" r="4.0"/><circle cx="6" cy="18.05" r="4.0"/><circle cx="6" cy="30.1" r="4.0"/></g></svg>
<div class="r" style="left:144px;top:1097px;width:32px;height:32px;background:#fff;box-sizing:border-box;border:2px solid #acacb4;border-radius:5px;"></div>
<svg class="r" style="left:242px;top:1093px" width="36" height="36" viewBox="0 0 36 36"><path d="M7.1,18.5 L13.8,25.5 L28.9,10.5" fill="none" stroke="#4f9a48" stroke-width="3.6" stroke-linecap="round" stroke-linejoin="miter"/></svg>
<div class="t m" style="left:344px;top:1099.72px;font-size:28px;letter-spacing:.33px;color:#2c2c34;-webkit-text-stroke:.25px #2c2c34">Carli</div>
<div class="t m" style="left:824px;top:1099.72px;font-size:28px;letter-spacing:.33px;color:#2c2c34;-webkit-text-stroke:.25px #2c2c34">McClure</div>
<div class="t m" style="left:1304px;top:1099.72px;font-size:28px;letter-spacing:.33px;color:#2c2c34;-webkit-text-stroke:.25px #2c2c34">Carli.McClure87@yahoo.c…</div>
<div class="t m" style="left:1784px;top:1099.72px;font-size:28px;letter-spacing:.33px;color:#2c2c34;-webkit-text-stroke:.25px #2c2c34">534-791-2164</div>
<svg class="r" style="left:55px;top:1164.95px" width="12" height="36.1" viewBox="0 0 12 36.1"><g fill="#62626a"><circle cx="6" cy="6" r="4.0"/><circle cx="6" cy="18.05" r="4.0"/><circle cx="6" cy="30.1" r="4.0"/></g></svg>
<div class="r" style="left:144px;top:1169px;width:32px;height:32px;background:#fff;box-sizing:border-box;border:2px solid #acacb4;border-radius:5px;"></div>
<svg class="r" style="left:242px;top:1165px" width="36" height="36" viewBox="0 0 36 36"><path d="M7.1,18.5 L13.8,25.5 L28.9,10.5" fill="none" stroke="#4f9a48" stroke-width="3.6" stroke-linecap="round" stroke-linejoin="miter"/></svg>
<div class="t m" style="left:344px;top:1171.72px;font-size:28px;letter-spacing:.33px;color:#2c2c34;-webkit-text-stroke:.25px #2c2c34">Zena</div>
<div class="t m" style="left:824px;top:1171.72px;font-size:28px;letter-spacing:.33px;color:#2c2c34;-webkit-text-stroke:.25px #2c2c34">Hahn</div>
<div class="t m" style="left:1304px;top:1171.72px;font-size:28px;letter-spacing:.33px;color:#2c2c34;-webkit-text-stroke:.25px #2c2c34">Zena.Hahn@hotmail.com</div>
<div class="t m" style="left:1784px;top:1171.72px;font-size:28px;letter-spacing:.33px;color:#2c2c34;-webkit-text-stroke:.25px #2c2c34">(458) 434-9006</div>
<svg class="r" style="left:55px;top:1236.95px" width="12" height="36.1" viewBox="0 0 12 36.1"><g fill="#62626a"><circle cx="6" cy="6" r="4.0"/><circle cx="6" cy="18.05" r="4.0"/><circle cx="6" cy="30.1" r="4.0"/></g></svg>
<div class="r" style="left:144px;top:1241px;width:32px;height:32px;background:#fff;box-sizing:border-box;border:2px solid #acacb4;border-radius:5px;"></div>
<svg class="r" style="left:242px;top:1237px" width="36" height="36" viewBox="0 0 36 36"><g><circle cx="18" cy="18" r="14.4" fill="none" stroke="#b9271c" stroke-width="3.2"/><path d="M18,10.9 V18.3" stroke="#b9271c" stroke-width="4.6" stroke-linecap="round"/><circle cx="18" cy="24.5" r="2.6" fill="#b9271c"/></g></svg>
<div class="t m" style="left:344px;top:1243.72px;font-size:28px;letter-spacing:.33px;color:#2c2c34;-webkit-text-stroke:.25px #2c2c34">Anika</div>
<div class="t m" style="left:824px;top:1243.72px;font-size:28px;letter-spacing:.33px;color:#2c2c34;-webkit-text-stroke:.25px #2c2c34">Dooley</div>
<div class="t m" style="left:1304px;top:1243.72px;font-size:28px;letter-spacing:.33px;color:#2c2c34;-webkit-text-stroke:.25px #2c2c34">Anika74@yahoo.com</div>
<div class="t m" style="left:1784px;top:1243.72px;font-size:28px;letter-spacing:.33px;color:#2c2c34;-webkit-text-stroke:.25px #2c2c34">1-946-394-8821 x7361</div>
<svg class="r" style="left:2164px;top:1237px" width="36" height="36" viewBox="0 0 36 36"><g><circle cx="18" cy="18" r="14.4" fill="none" stroke="#b9271c" stroke-width="3.2"/><path d="M18,10.9 V18.3" stroke="#b9271c" stroke-width="4.6" stroke-linecap="round"/><circle cx="18" cy="24.5" r="2.6" fill="#b9271c"/></g></svg>
<svg class="r" style="left:55px;top:1308.95px" width="12" height="36.1" viewBox="0 0 12 36.1"><g fill="#62626a"><circle cx="6" cy="6" r="4.0"/><circle cx="6" cy="18.05" r="4.0"/><circle cx="6" cy="30.1" r="4.0"/></g></svg>
<div class="r" style="left:144px;top:1313px;width:32px;height:32px;background:#fff;box-sizing:border-box;border:2px solid #acacb4;border-radius:5px;"></div>
<svg class="r" style="left:242px;top:1309px" width="36" height="36" viewBox="0 0 36 36"><g><circle cx="18" cy="18" r="14.4" fill="none" stroke="#b9271c" stroke-width="3.2"/><path d="M18,10.9 V18.3" stroke="#b9271c" stroke-width="4.6" stroke-linecap="round"/><circle cx="18" cy="24.5" r="2.6" fill="#b9271c"/></g></svg>
<div class="t m" style="left:344px;top:1315.72px;font-size:28px;letter-spacing:.33px;color:#2c2c34;-webkit-text-stroke:.25px #2c2c34">Alberto</div>
<div class="t m" style="left:824px;top:1315.72px;font-size:28px;letter-spacing:.33px;color:#2c2c34;-webkit-text-stroke:.25px #2c2c34">Beatty</div>
<div class="t m" style="left:1304px;top:1315.72px;font-size:28px;letter-spacing:.33px;color:#2c2c34;-webkit-text-stroke:.25px #2c2c34">Alberto.Beatty@yahoo.com</div>
<div class="t m" style="left:1784px;top:1315.72px;font-size:28px;letter-spacing:.33px;color:#2c2c34;-webkit-text-stroke:.25px #2c2c34">957-937-5242 x1544</div>
<svg class="r" style="left:2164px;top:1309px" width="36" height="36" viewBox="0 0 36 36"><g><circle cx="18" cy="18" r="14.4" fill="none" stroke="#b9271c" stroke-width="3.2"/><path d="M18,10.9 V18.3" stroke="#b9271c" stroke-width="4.6" stroke-linecap="round"/><circle cx="18" cy="24.5" r="2.6" fill="#b9271c"/></g></svg>
<svg class="r" style="left:55px;top:1380.95px" width="12" height="36.1" viewBox="0 0 12 36.1"><g fill="#62626a"><circle cx="6" cy="6" r="4.0"/><circle cx="6" cy="18.05" r="4.0"/><circle cx="6" cy="30.1" r="4.0"/></g></svg>
<div class="r" style="left:144px;top:1385px;width:32px;height:32px;background:#fff;box-sizing:border-box;border:2px solid #acacb4;border-radius:5px;"></div>
<svg class="r" style="left:242px;top:1381px" width="36" height="36" viewBox="0 0 36 36"><g><circle cx="18" cy="18" r="14.4" fill="none" stroke="#b9271c" stroke-width="3.2"/><path d="M18,10.9 V18.3" stroke="#b9271c" stroke-width="4.6" stroke-linecap="round"/><circle cx="18" cy="24.5" r="2.6" fill="#b9271c"/></g></svg>
<div class="t m" style="left:344px;top:1387.72px;font-size:28px;letter-spacing:.33px;color:#2c2c34;-webkit-text-stroke:.25px #2c2c34">Charley</div>
<div class="t m" style="left:824px;top:1387.72px;font-size:28px;letter-spacing:.33px;color:#2c2c34;-webkit-text-stroke:.25px #2c2c34">Trantow</div>
<div class="t m" style="left:1304px;top:1387.72px;font-size:28px;letter-spacing:.33px;color:#2c2c34;-webkit-text-stroke:.25px #2c2c34">Charley68@gmail.com</div>
<div class="t m" style="left:1784px;top:1387.72px;font-size:28px;letter-spacing:.33px;color:#2c2c34;-webkit-text-stroke:.25px #2c2c34">998.514.1017 x63474</div>
<svg class="r" style="left:2164px;top:1381px" width="36" height="36" viewBox="0 0 36 36"><g><circle cx="18" cy="18" r="14.4" fill="none" stroke="#b9271c" stroke-width="3.2"/><path d="M18,10.9 V18.3" stroke="#b9271c" stroke-width="4.6" stroke-linecap="round"/><circle cx="18" cy="24.5" r="2.6" fill="#b9271c"/></g></svg>
<svg class="r" style="left:55px;top:1452.95px" width="12" height="36.1" viewBox="0 0 12 36.1"><g fill="#62626a"><circle cx="6" cy="6" r="4.0"/><circle cx="6" cy="18.05" r="4.0"/><circle cx="6" cy="30.1" r="4.0"/></g></svg>
<div class="r" style="left:144px;top:1457px;width:32px;height:32px;background:#fff;box-sizing:border-box;border:2px solid #acacb4;border-radius:5px;"></div>
<svg class="r" style="left:242px;top:1453px" width="36" height="36" viewBox="0 0 36 36"><g><circle cx="18" cy="18" r="14.4" fill="none" stroke="#b9271c" stroke-width="3.2"/><path d="M18,10.9 V18.3" stroke="#b9271c" stroke-width="4.6" stroke-linecap="round"/><circle cx="18" cy="24.5" r="2.6" fill="#b9271c"/></g></svg>
<div class="t m" style="left:344px;top:1459.72px;font-size:28px;letter-spacing:.33px;color:#2c2c34;-webkit-text-stroke:.25px #2c2c34">Merritt</div>
<svg class="r" style="left:724px;top:1453px" width="36" height="36" viewBox="0 0 36 36"><g><circle cx="18" cy="18" r="14.4" fill="none" stroke="#b9271c" stroke-width="3.2"/><path d="M18,10.9 V18.3" stroke="#b9271c" stroke-width="4.6" stroke-linecap="round"/><circle cx="18" cy="24.5" r="2.6" fill="#b9271c"/></g></svg>
<div class="t m" style="left:824px;top:1459.72px;font-size:28px;letter-spacing:.33px;color:#2c2c34;-webkit-text-stroke:.25px #2c2c34">O&#x27;Keefe</div>
<svg class="r" style="left:1204px;top:1453px" width="36" height="36" viewBox="0 0 36 36"><g><circle cx="18" cy="18" r="14.4" fill="none" stroke="#b9271c" stroke-width="3.2"/><path d="M18,10.9 V18.3" stroke="#b9271c" stroke-width="4.6" stroke-linecap="round"/><circle cx="18" cy="24.5" r="2.6" fill="#b9271c"/></g></svg>
<div class="t m" style="left:1304px;top:1459.72px;font-size:28px;letter-spacing:.33px;color:#2c2c34;-webkit-text-stroke:.25px #2c2c34">Merritt.OKeefe@gmail.com</div>
<div class="t m" style="left:1784px;top:1459.72px;font-size:28px;letter-spacing:.33px;color:#2c2c34;-webkit-text-stroke:.25px #2c2c34">(929) 435-9754 x540</div>
<svg class="r" style="left:2164px;top:1453px" width="36" height="36" viewBox="0 0 36 36"><g><circle cx="18" cy="18" r="14.4" fill="none" stroke="#b9271c" stroke-width="3.2"/><path d="M18,10.9 V18.3" stroke="#b9271c" stroke-width="4.6" stroke-linecap="round"/><circle cx="18" cy="24.5" r="2.6" fill="#b9271c"/></g></svg>
<svg class="r" style="left:55px;top:1524.95px" width="12" height="36.1" viewBox="0 0 12 36.1"><g fill="#62626a"><circle cx="6" cy="6" r="4.0"/><circle cx="6" cy="18.05" r="4.0"/><circle cx="6" cy="30.1" r="4.0"/></g></svg>
<div class="r" style="left:144px;top:1529px;width:32px;height:32px;background:#fff;box-sizing:border-box;border:2px solid #acacb4;border-radius:5px;"></div>
<svg class="r" style="left:242px;top:1525px" width="36" height="36" viewBox="0 0 36 36"><g><circle cx="18" cy="18" r="14.4" fill="none" stroke="#b9271c" stroke-width="3.2"/><path d="M18,10.9 V18.3" stroke="#b9271c" stroke-width="4.6" stroke-linecap="round"/><circle cx="18" cy="24.5" r="2.6" fill="#b9271c"/></g></svg>
<div class="t m" style="left:344px;top:1531.72px;font-size:28px;letter-spacing:.33px;color:#2c2c34;-webkit-text-stroke:.25px #2c2c34">Joany</div>
<div class="t m" style="left:824px;top:1531.72px;font-size:28px;letter-spacing:.33px;color:#2c2c34;-webkit-text-stroke:.25px #2c2c34">Bradtke</div>
<div class="t m" style="left:1304px;top:1531.72px;font-size:28px;letter-spacing:.33px;color:#2c2c34;-webkit-text-stroke:.25px #2c2c34">Joany_Bradtke4@gmail.com</div>
<div class="t m" style="left:1784px;top:1531.72px;font-size:28px;letter-spacing:.33px;color:#2c2c34;-webkit-text-stroke:.25px #2c2c34">(605) 473-0460 x0820</div>
<svg class="r" style="left:2164px;top:1525px" width="36" height="36" viewBox="0 0 36 36"><g><circle cx="18" cy="18" r="14.4" fill="none" stroke="#b9271c" stroke-width="3.2"/><path d="M18,10.9 V18.3" stroke="#b9271c" stroke-width="4.6" stroke-linecap="round"/><circle cx="18" cy="24.5" r="2.6" fill="#b9271c"/></g></svg>
</div></div>
<svg class="r" style="left:67px;top:1611px" width="42" height="42" viewBox="0 0 42 42"><g fill="none" stroke="#62626a"><circle cx="21.1" cy="20.9" r="16.3" stroke-width="3.4"/><path d="M15.2,20.9 H27 M21.1,15 V26.8" stroke-width="4" stroke-linecap="round"/></g></svg>
<div class="t s" id="add" style="left:125.50px;top:1619.00px;font-size:26.8px;color:#2c2c34;-webkit-text-stroke:1.3px #2c2c34;letter-spacing:1.100px;transform:scaleX(0.9646);">Add record</div>
<div class="t s" id="total" style="left:2051.00px;top:1618.01px;font-size:28px;color:#6b6b73;-webkit-text-stroke:0.3px #6b6b73;letter-spacing:0.356px;">Total records: 1000</div>
<div class="r" style="left:0px;top:1674.5px;width:53.2px;height:30px;background:#202126;border-radius:0 7px 0 0;"></div>
<div class="t s" style="left:-8.5px;top:1684.2px;font-size:24px;color:#fff;-webkit-text-stroke:.6px #fff">sary</div>
</div>
</body></html>
